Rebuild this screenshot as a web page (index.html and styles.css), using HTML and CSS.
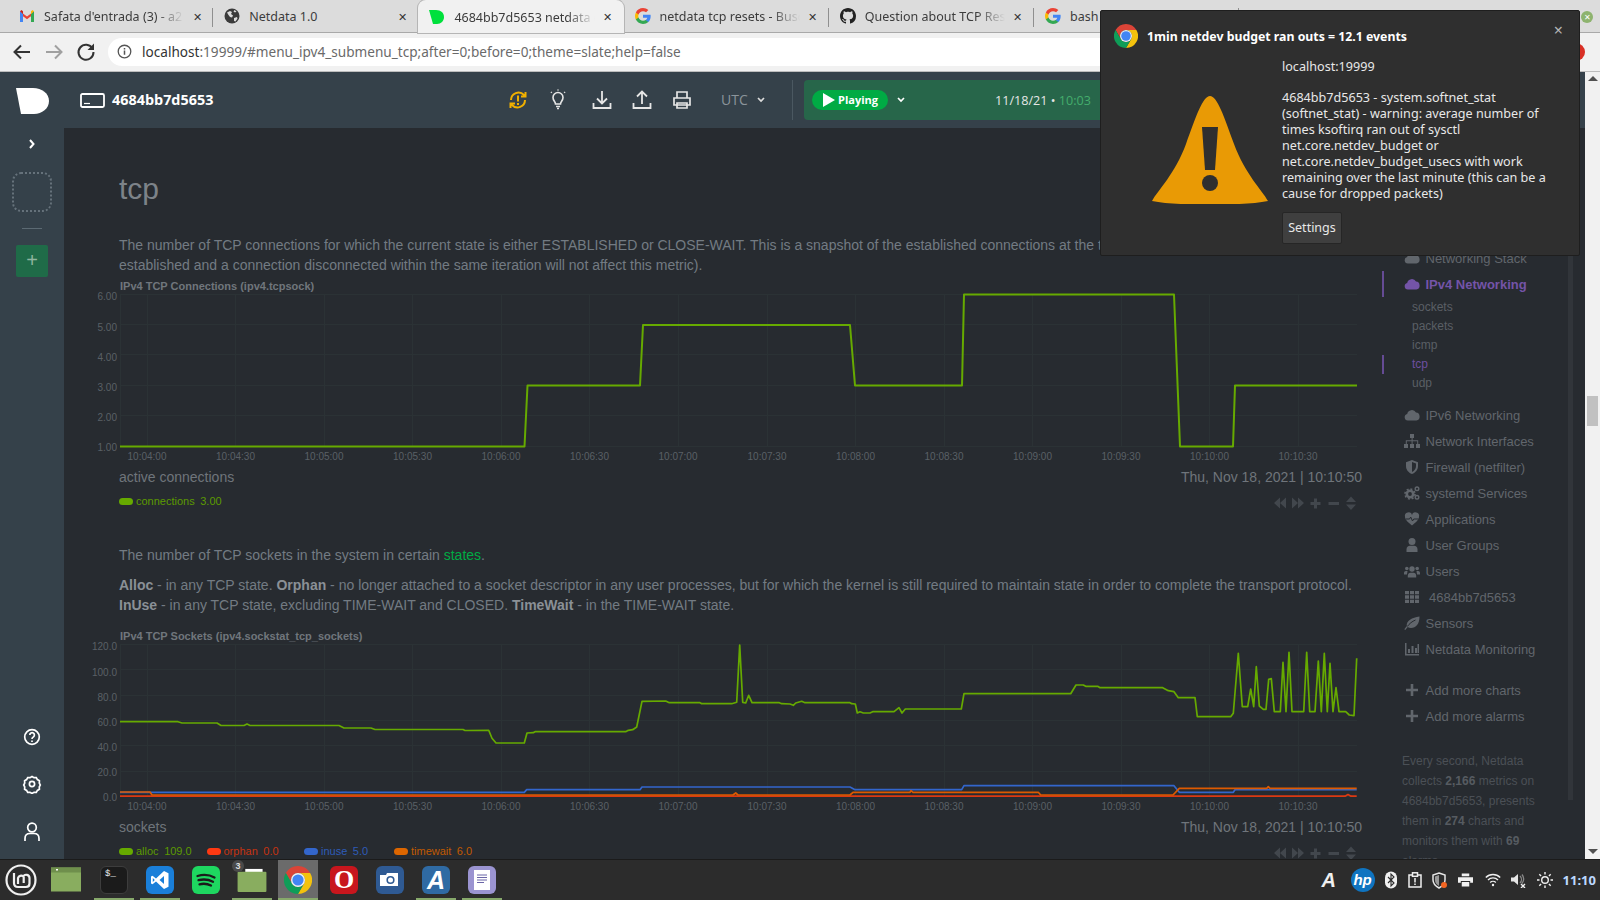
FILE: index.html
```html
<!DOCTYPE html>
<html lang="en">
<head>
<meta charset="utf-8">
<title>4684bb7d5653 netdata dashboard</title>
<link rel="stylesheet" href="styles.css">
</head>
<body>
<svg class="defs" width="0" height="0" aria-hidden="true">
  <symbol id="g-logo" viewBox="0 0 24 24">
    <path fill="#4285f4" d="M23.49 12.27c0-.79-.07-1.54-.19-2.27H12v4.51h6.47c-.29 1.48-1.14 2.73-2.4 3.58v3h3.86c2.26-2.09 3.56-5.17 3.56-8.82z"/>
    <path fill="#34a853" d="M12 24c3.24 0 5.95-1.08 7.93-2.91l-3.86-3c-1.08.72-2.45 1.16-4.07 1.16-3.13 0-5.78-2.11-6.73-4.96H1.29v3.09C3.26 21.3 7.31 24 12 24z"/>
    <path fill="#fbbc05" d="M5.27 14.29c-.25-.72-.38-1.49-.38-2.29s.14-1.57.38-2.29V6.62H1.29C.47 8.24 0 10.06 0 12s.47 3.76 1.29 5.38l3.98-3.09z"/>
    <path fill="#ea4335" d="M12 4.75c1.77 0 3.35.61 4.6 1.8l3.42-3.42C17.95 1.19 15.24 0 12 0 7.31 0 3.26 2.7 1.29 6.62l3.98 3.09c.95-2.85 3.6-4.96 6.73-4.96z"/>
  </symbol>
  <symbol id="chrome" viewBox="0 0 24 24">
    <path fill="#db4437" d="M12 0A12 12 0 0 0 1.6 6L6.8 15A6 6 0 0 1 12 6H22.4A12 12 0 0 0 12 0z"/>
    <path fill="#f4c20d" d="M22.4 6H12A6 6 0 0 1 17.2 15L12 24A12 12 0 0 0 22.4 6z"/>
    <path fill="#0f9d58" d="M1.6 6A12 12 0 0 0 12 24L17.2 15A6 6 0 0 1 6.8 15z"/>
    <circle cx="12" cy="12" r="6" fill="#f1f1f1"/>
    <circle cx="12" cy="12" r="4.8" fill="#4285f4"/>
  </symbol>
  <symbol id="cloud" viewBox="0 0 16 16"><path d="M3.8 13.5A3.3 3.3 0 0 1 3.2 7 4.7 4.7 0 0 1 12 5.6 4 4 0 0 1 12.4 13.5z"/></symbol>
  <symbol id="sitemap" viewBox="0 0 16 16"><path d="M6 1h4v4H8.6v2.3h5.6V11H16v4h-4v-4h1.2V8.3H8.6V11H10v4H6v-4h1.6V8.3H2.8V11H4v4H0v-4h1.8V7.3h5.8V5H6z"/></symbol>
  <symbol id="shield" viewBox="0 0 16 16"><path fill-rule="evenodd" d="M8 1l6 2.2V7c0 3.8-2.4 6.6-6 8-3.6-1.4-6-4.2-6-8V3.2zM8 3v10c2.4-1.200 4-3.300 4-6V4.500z"/></symbol>
  <symbol id="cogs" viewBox="0 0 16 16"><circle cx="6" cy="9" r="3.200" fill="none" stroke="currentColor" stroke-width="2.600"/><circle cx="6" cy="9" r="5" fill="none" stroke="currentColor" stroke-width="1.600" stroke-dasharray="2 1.900"/><circle cx="13" cy="3.800" r="1.800" fill="none" stroke="currentColor" stroke-width="1.400"/><circle cx="13" cy="12.300" r="1.800" fill="none" stroke="currentColor" stroke-width="1.400"/></symbol>
  <symbol id="heart" viewBox="0 0 16 16"><path d="M8 14.500C3 10.500 1 8.500 1 5.800A3.500 3.500 0 0 1 8 4.200 3.500 3.500 0 0 1 15 5.800C15 8.500 13 10.500 8 14.500z"/><path d="M1.500 8h4l1.200-2 1.800 4 1.200-2h5" fill="none" stroke="#272b30" stroke-width="1"/></symbol>
  <symbol id="user" viewBox="0 0 16 16"><circle cx="8" cy="4.500" r="3.500"/><path d="M2.500 15v-2.500C2.500 10 4 8.800 6 8.800h4c2 0 3.500 1.200 3.500 3.700V15z"/></symbol>
  <symbol id="users" viewBox="0 0 16 16"><circle cx="8" cy="6" r="2.700"/><path d="M3.800 14.500v-1.800c0-2 1.200-3 2.600-3h3.200c1.400 0 2.600 1 2.600 3v1.800z"/><circle cx="2.800" cy="5.500" r="1.800"/><circle cx="13.200" cy="5.500" r="1.800"/><path d="M0 11.500V10c0-1.300.8-2 1.800-2H3.500L3 11.500zM16 11.500V10c0-1.300-.8-2-1.800-2H12.500L13 11.500z"/></symbol>
  <symbol id="grid" viewBox="0 0 16 16"><path d="M1 2h4v3.300H1zM6 2h4v3.300H6zM11 2h4v3.300h-4zM1 6.300h4v3.400H1zM6 6.300h4v3.400H6zM11 6.300h4v3.400h-4zM1 10.700h4V14H1zM6 10.700h4V14H6zM11 10.700h4V14h-4z"/></symbol>
  <symbol id="leaf" viewBox="0 0 16 16"><path d="M15.500 1.500C15.500 9 12 13 7 13c-1.300 0-2.500-.3-3.300-.9L1.300 15 .3 14.200l2.500-3.300C2 6 8 2.500 15.500 1.500z"/><path d="M3.300 11.500C5.500 8.500 8 6.500 11.500 5" fill="none" stroke="#272b30" stroke-width="1"/></symbol>
  <symbol id="chartbar" viewBox="0 0 16 16"><path d="M1 2h1.500v11H15v1.500H1zM4 8h2v4H4zM7.500 5H9.500v7h-2zM11 7h2v5h-2zM13.500 3h1.500v9h-1.500z"/></symbol>
  <symbol id="plus" viewBox="0 0 16 16"><path d="M6.700 2h2.600v4.700H14v2.600H9.300V14H6.700V9.300H2V6.700h4.700z"/></symbol>
  <symbol id="ctrls" viewBox="0 0 92 14">
    <path d="M7 1.500v11L1 7zM13 1.500v11L7 7zM19 1.500v11L25 7zM25 1.500v11L31 7zM41 2.500h3v3.500h3.500v3H44v3.500h-3V9h-3.500V6H41zM55.500 6H66v3H55.500zM78 .5l5 5.500H73zM78 14l5-5.500H73z"/>
  </symbol>
</svg>

<header class="tabs">
  <div class="tab">
    <svg class="fav" viewBox="0 0 16 16"><path fill="#ea4335" d="M1 3.200 8 8.500l7-5.300V6l-7 5.300L1 6z"/><path fill="#4285f4" d="M1 3.200V14h3V6z"/><path fill="#34a853" d="M15 3.200V14h-3V6z"/><path fill="#c5221f" d="M1 3.200 2.500 2 4 3.300V6z"/><path fill="#fbbc05" d="M15 3.200 13.500 2 12 3.300V6z"/></svg>
    <span class="tab-label tab-fade">Safata d'entrada (3) - a2</span><span class="tab-x">✕</span>
  </div>
  <div class="tab">
    <svg class="fav" viewBox="0 0 16 16"><circle cx="8" cy="8" r="7.500" fill="#3b3b3b"/><path fill="#dcdcdc" d="M3 4.500l3-1.500 2 1-1 2 2 1.500-1 2-2-.5-1.500-2zM10 10l3-1 .5 1.500-2 3-1.500-.5zM10.500 2l2 1.500-1.500 1-1.500-1z"/></svg>
    <span class="tab-label">Netdata 1.0</span><span class="tab-x">✕</span>
  </div>
  <div class="tab tab-active">
    <svg class="fav" viewBox="0 0 16 16"><path fill="#00e03c" d="M0 1h7c5 0 8 3 8 7s-3 7-7 7H4z"/></svg>
    <span class="tab-label tab-fade">4684bb7d5653 netdata d</span><span class="tab-x">✕</span>
  </div>
  <div class="tab">
    <svg class="fav"><use href="#g-logo"/></svg>
    <span class="tab-label tab-fade">netdata tcp resets - Busc</span><span class="tab-x">✕</span>
  </div>
  <div class="tab">
    <svg class="fav" viewBox="0 0 16 16"><path fill="#222" d="M8 0C3.580 0 0 3.580 0 8c0 3.540 2.290 6.530 5.470 7.590.4.070.55-.17.55-.38 0-.19-.01-.82-.01-1.490-2.010.37-2.530-.49-2.690-.94-.09-.23-.48-.94-.82-1.130-.28-.15-.68-.52-.01-.53.63-.01 1.080.58 1.230.82.72 1.210 1.870.87 2.330.66.07-.52.28-.87.51-1.070-1.780-.2-3.640-.89-3.640-3.950 0-.87.31-1.590.82-2.150-.08-.2-.36-1.020.08-2.120 0 0 .67-.21 2.200.82.64-.18 1.320-.27 2-.27.68 0 1.360.09 2 .27 1.530-1.040 2.200-.82 2.200-.82.44 1.100.16 1.920.08 2.120.51.56.82 1.270.82 2.150 0 3.070-1.870 3.750-3.650 3.950.29.25.54.73.54 1.480 0 1.070-.01 1.930-.01 2.200 0 .21.15.46.55.38A8.013 8.013 0 0 0 16 8c0-4.420-3.580-8-8-8z"/></svg>
    <span class="tab-label tab-fade">Question about TCP Res</span><span class="tab-x">✕</span>
  </div>
  <div class="tab">
    <svg class="fav"><use href="#g-logo"/></svg>
    <span class="tab-label">bash</span>
  </div>
  <span class="win-close">✕</span>
</header>

<nav class="toolbar">
  <svg class="tb-ico" viewBox="0 0 24 24"><path d="M20 12H5M11 5.500 4.500 12l6.500 6.500" fill="none" stroke="#333" stroke-width="2"/></svg>
  <svg class="tb-ico" viewBox="0 0 24 24"><path d="M4 12h15M13 5.500l6.500 6.500-6.500 6.500" fill="none" stroke="#a0a0a0" stroke-width="2"/></svg>
  <svg class="tb-ico" viewBox="0 0 24 24"><path d="M18.500 8.500A7.500 7.500 0 1 0 19.500 12" fill="none" stroke="#333" stroke-width="2"/><path d="M20 3.500v6.500h-6.500z" fill="#333"/></svg>
  <div class="omnibox">
    <svg class="info" viewBox="0 0 16 16"><circle cx="8" cy="8" r="6.700" fill="none" stroke="#555" stroke-width="1.400"/><path d="M7.200 7h1.600v4.500H7.200zM7.200 4.300h1.600v1.600H7.200z" fill="#555"/></svg>
    <span class="url"><b>localhost</b>:19999/#menu_ipv4_submenu_tcp;after=0;before=0;theme=slate;help=false</span>
  </div>
  <span class="update-dot"></span>
</nav>

<div class="viewport">
  <div class="page">
    <div class="ndhead">
      <svg class="nd-logo" viewBox="0 0 33 26"><path fill="#fff" d="M0 0h17c9 0 16 5.500 16 13s-7 13-15 13H5z"/></svg>
      <svg class="nd-node" viewBox="0 0 25 15"><rect x="1" y="1" width="23" height="13" rx="1.500" fill="none" stroke="#fff" stroke-width="1.800"/><path d="M4 10.500h6" stroke="#fff" stroke-width="1.200"/></svg>
      <span class="nd-name">4684bb7d5653</span>
      <div class="tools">
        <svg class="tool" viewBox="0 0 24 24" fill="none" stroke="#f0b000" stroke-width="2"><path d="M5 12a7.500 7.500 0 0 1 13-5l1.500 1.500M19.500 4v4.500H15M19 12a7.500 7.500 0 0 1-13 5l-1.500-1.500M4.500 20v-4.500H9"/><path d="M12 7.500v6M12 15v2"/></svg>
        <svg class="tool" viewBox="0 0 24 24" fill="none" stroke="#e6e6e6" stroke-width="1.600"><path d="M9.500 16c0-2.500-2.500-3.200-2.500-6.500a5 5 0 0 1 10 0c0 3.300-2.500 4-2.500 6.500zM10 18.500h4M11 20.500h2M12 1.500v1M5 4l.8.800M19 4l-.8.800"/></svg>
        <svg class="tool tool-wide" viewBox="0 0 24 24" fill="none" stroke="#e6e6e6" stroke-width="1.800"><path d="M12 3v12M7 10.500l5 5 5-5M3.500 15v5h17v-5"/></svg>
        <svg class="tool" viewBox="0 0 24 24" fill="none" stroke="#e6e6e6" stroke-width="1.800"><path d="M12 16V4M7 8.500l5-5 5 5M3.500 15v5h17v-5"/></svg>
        <svg class="tool" viewBox="0 0 24 24" fill="none" stroke="#e6e6e6" stroke-width="1.700"><path d="M7 10V4h10v6M4 10h16v7H4zM7 15h10v5H7z"/></svg>
      </div>
      <span class="tz">UTC</span>
      <svg class="caret" viewBox="0 0 8 6"><path d="M1 1l3 3 3-3" fill="none" stroke="#dcdcdc" stroke-width="1.700"/></svg>
      <span class="nd-sep"></span>
      <div class="playbar">
        <div class="playbtn"><svg class="playico" viewBox="0 0 12 14"><path d="M0 0l12 7-12 7z" fill="#fff"/></svg><span class="playtxt">Playing</span></div>
        <svg class="caret caret-play" viewBox="0 0 8 6"><path d="M1 1l3 3 3-3" fill="none" stroke="#fff" stroke-width="1.700"/></svg>
        <span class="playdate">11/18/21 • <em>10:03</em></span>
      </div>
    </div>

    <div class="body">
      <aside class="rail">
        <svg class="rail-chev" viewBox="0 0 8 10"><path d="M2 1l3.500 4L2 9" fill="none" stroke="#fff" stroke-width="2"/></svg>
        <div class="rail-slot"></div>
        <div class="rail-hr"></div>
        <div class="rail-add">+</div>
        <div class="rail-foot">
          <svg class="rail-ico" viewBox="0 0 20 20" fill="none" stroke="#fff" stroke-width="1.700"><circle cx="10" cy="10" r="7.300"/><path d="M7.800 8a2.300 2.300 0 1 1 3.500 2c-.9.500-1.300 1-1.300 2M10 13.500v1.500"/></svg>
          <svg class="rail-ico" viewBox="0 0 20 20" fill="none" stroke="#fff" stroke-width="1.700"><path d="M10 2.500l2 1.200 2.300-.1 1.100 2 2 1.200-.1 2.300 1 1.900-1 1.900.1 2.300-2 1.200-1.100 2-2.300-.1-2 1.200-2-1.200-2.300.1-1.100-2-2-1.200.1-2.300-1-1.900 1-1.900-.1-2.300 2-1.200 1.100-2 2.300.1z"/><circle cx="10" cy="10" r="2.600"/></svg>
          <svg class="rail-ico rail-user" viewBox="0 0 20 20" fill="none" stroke="#fff" stroke-width="1.700"><circle cx="10" cy="6.500" r="4.300"/><path d="M3 20v-2.500c0-3 2-5 5-5h4c3 0 5 2 5 5V20"/></svg>
        </div>
      </aside>

      <main class="main">
        <h1 class="title">tcp</h1>
        <p class="text text-first">The number of TCP connections for which the current state is either ESTABLISHED or CLOSE-WAIT. This is a snapshot of the established connections at the time of measurement (i.e. a connection established and a connection disconnected within the same iteration will not affect this metric).</p>
        <div class="chart-title chart-title-1">IPv4 TCP Connections (ipv4.tcpsock)</div>
        <svg class="plot" viewBox="64 292 1306 170" width="1306" height="170">
          <path class="grid" d="M120.500 294V447M147.500 294V447M235.500 294V447M324.500 294V447M412.500 294V447M501.500 294V447M589.500 294V447M678.500 294V447M767.500 294V447M855.500 294V447M944.500 294V447M1032.500 294V447M1121.500 294V447M1209.500 294V447M1298.500 294V447M120 294.500H1357M120 324.500H1357M120 354.500H1357M120 385.500H1357M120 415.500H1357M120 446.500H1357"/>
          <g class="ylab"><text x="117" y="300">6.00</text><text x="117" y="330.500">5.00</text><text x="117" y="360.500">4.00</text><text x="117" y="391">3.00</text><text x="117" y="421">2.00</text><text x="117" y="451">1.00</text></g>
          <g class="xlab"><text x="147" y="460">10:04:00</text><text x="235.500" y="460">10:04:30</text><text x="324" y="460">10:05:00</text><text x="412.500" y="460">10:05:30</text><text x="501" y="460">10:06:00</text><text x="589.500" y="460">10:06:30</text><text x="678" y="460">10:07:00</text><text x="767" y="460">10:07:30</text><text x="855.500" y="460">10:08:00</text><text x="944" y="460">10:08:30</text><text x="1032.500" y="460">10:09:00</text><text x="1121" y="460">10:09:30</text><text x="1209.500" y="460">10:10:00</text><text x="1298" y="460">10:10:30</text></g>
          <polyline class="line l-green l-thick" points="120,446.500 524.500,446.500 527.500,385.500 640,385.500 643,325 850,325 855,385.500 962,385.500 964,294.500 1174,294.500 1180,446.500 1233,446.500 1235,385.500 1357,385.500"/>
        </svg>
        <div class="info-row"><span>active connections</span><span>Thu, Nov 18, 2021 | 10:10:50</span></div>
        <div class="legend-row">
          <span class="leg leg-green"><i></i>connections<b>3.00</b></span>
          <svg class="ctrls"><use href="#ctrls"/></svg>
        </div>
        <p class="text text-second">The number of TCP sockets in the system in certain <a class="link">states</a>.</p>
        <p class="text text-third"><b>Alloc</b> - in any TCP state. <b>Orphan</b> - no longer attached to a socket descriptor in any user processes, but for which the kernel is still required to maintain state in order to complete the transport protocol. <b>InUse</b> - in any TCP state, excluding TIME-WAIT and CLOSED. <b>TimeWait</b> - in the TIME-WAIT state.</p>
        <div class="chart-title chart-title-2">IPv4 TCP Sockets (ipv4.sockstat_tcp_sockets)</div>
        <svg class="plot" viewBox="64 642 1306 170" width="1306" height="170">
          <path class="grid" d="M120.500 644V797M147.500 644V797M235.500 644V797M324.500 644V797M412.500 644V797M501.500 644V797M589.500 644V797M678.500 644V797M767.500 644V797M855.500 644V797M944.500 644V797M1032.500 644V797M1121.500 644V797M1209.500 644V797M1298.500 644V797M120 644.500H1357M120 669.500H1357M120 695.500H1357M120 720.500H1357M120 745.500H1357M120 771.500H1357M120 796.500H1357"/>
          <g class="ylab"><text x="117" y="649.500">120.0</text><text x="117" y="675.500">100.0</text><text x="117" y="700.500">80.0</text><text x="117" y="725.500">60.0</text><text x="117" y="750.500">40.0</text><text x="117" y="775.500">20.0</text><text x="117" y="801">0.0</text></g>
          <g class="xlab"><text x="147" y="810">10:04:00</text><text x="235.500" y="810">10:04:30</text><text x="324" y="810">10:05:00</text><text x="412.500" y="810">10:05:30</text><text x="501" y="810">10:06:00</text><text x="589.500" y="810">10:06:30</text><text x="678" y="810">10:07:00</text><text x="767" y="810">10:07:30</text><text x="855.500" y="810">10:08:00</text><text x="944" y="810">10:08:30</text><text x="1032.500" y="810">10:09:00</text><text x="1121" y="810">10:09:30</text><text x="1209.500" y="810">10:10:00</text><text x="1298" y="810">10:10:30</text></g>
          <polyline class="line l-green" points="120,721.700 178,721.700 182,723 217,723 221,725.500 244,725.500 247,724 250,725.500 339,725.500 344,728 371,728 375,729.500 463,729.500 465,730.500 488.700,730.300 492,738.300 496,743 524.300,743 527,733 533.300,732.700 535,731.700 625.700,731.700 628.300,730.300 632.700,729.700 636.700,727 642,701.300 665.700,701 669.300,702.700 700,702.700 701.700,703.700 731.700,703.700 736.700,702.300 739.700,645 742.700,702.300 745.700,703 748.700,695.300 752,702.700 779.300,702.700 781.700,703.700 790,704 793.300,705.300 795.700,703 801.700,701.300 805,702.700 850,702.700 851.700,703.700 855.300,704 857.300,713 860,711.700 863.300,713 870,713 872.700,711.700 894,711.700 899,707.700 902,713 905.300,709 961.300,709 964,693.700 1070.700,693.700 1076,685 1083.300,685 1085.700,686.300 1097.700,686.300 1100,687.700 1162.700,687.700 1168.300,690.700 1174,691.700 1178.300,697.700 1195,697.700 1197.300,716.700 1230.700,716.700 1233.300,713.300 1238.300,653.300 1242.300,706.700 1247.700,706.700 1250.700,689 1253.700,706.700 1256.300,666.700 1259.300,706 1263.300,709.300 1266,709.300 1268.700,679.300 1271.300,678.700 1274.300,711.700 1280.300,711.700 1283,662.300 1286,711.700 1289,652.300 1292,711.700 1303.700,711.700 1306.700,652.300 1309.700,711.700 1315,711.700 1318.300,661 1321.300,711.700 1324.300,653.300 1327.300,711.700 1330,663.300 1333,711.700 1336,687.700 1339,711.700 1345.700,711.700 1349.300,715 1354,715.700 1356.700,658.300"/>
          <polyline class="line l-blue" points="120,792.300 524.300,792.300 526.700,789.700 640,789.700 642,787 850,787 855,789.700 961.700,789.700 964,785.700 1174,785.700 1179.300,792.300 1233.300,792.300 1235,789.700 1356.700,789.700"/>
          <polyline class="line l-red" points="120,796.200 1345,796.200 1348,794.500 1351,796.200 1356.700,796.200"/>
          <polyline class="line l-orange" points="120,792 150,792 152,795 733,795 735.700,793 738,795 850,795 853,792.300 910,792.300 911,790.700 913,792.300 1038.300,792.300 1040.700,795 1173,795 1179.300,788.300 1266.700,788.300 1268.300,786.700 1270,788.300 1356.700,788.300"/>
        </svg>
        <div class="info-row"><span>sockets</span><span>Thu, Nov 18, 2021 | 10:10:50</span></div>
        <div class="legend-row">
          <span class="leg leg-green leg-w1"><i></i>alloc<b>109.0</b></span>
          <span class="leg leg-red leg-w2"><i></i>orphan<b>0.0</b></span>
          <span class="leg leg-blue leg-w3"><i></i>inuse<b>5.0</b></span>
          <span class="leg leg-orange"><i></i>timewait<b>6.0</b></span>
          <svg class="ctrls"><use href="#ctrls"/></svg>
        </div>
      </main>

      <aside class="side">
        <div class="side-list">
          <a class="nav"><svg class="nav-ico"><use href="#cloud"/></svg>Networking Stack</a>
          <a class="nav nav-on"><svg class="nav-ico"><use href="#cloud"/></svg>IPv4 Networking</a>
          <div class="sub">
            <a class="sub-item">sockets</a>
            <a class="sub-item">packets</a>
            <a class="sub-item">icmp</a>
            <a class="sub-item sub-on">tcp</a>
            <a class="sub-item">udp</a>
          </div>
          <a class="nav"><svg class="nav-ico"><use href="#cloud"/></svg>IPv6 Networking</a>
          <a class="nav"><svg class="nav-ico"><use href="#sitemap"/></svg>Network Interfaces</a>
          <a class="nav"><svg class="nav-ico"><use href="#shield"/></svg>Firewall (netfilter)</a>
          <a class="nav"><svg class="nav-ico"><use href="#cogs"/></svg>systemd Services</a>
          <a class="nav"><svg class="nav-ico"><use href="#heart"/></svg>Applications</a>
          <a class="nav"><svg class="nav-ico"><use href="#user"/></svg>User Groups</a>
          <a class="nav"><svg class="nav-ico"><use href="#users"/></svg>Users</a>
          <a class="nav nav-node"><svg class="nav-ico"><use href="#grid"/></svg>4684bb7d5653</a>
          <a class="nav"><svg class="nav-ico"><use href="#leaf"/></svg>Sensors</a>
          <a class="nav"><svg class="nav-ico"><use href="#chartbar"/></svg>Netdata Monitoring</a>
          <a class="nav nav-add"><svg class="nav-ico"><use href="#plus"/></svg>Add more charts</a>
          <a class="nav"><svg class="nav-ico"><use href="#plus"/></svg>Add more alarms</a>
          <p class="side-note">Every second, Netdata collects <b>2,166</b> metrics on 4684bb7d5653, presents them in <b>274</b> charts and monitors them with <b>69</b> alarms.</p>
        </div>
        <div class="side-thumb"></div>
      </aside>
    </div>
  </div>
  <div class="scrollbar">
    <span class="arrow arrow-up"></span>
    <span class="thumb"></span>
    <span class="arrow arrow-down"></span>
  </div>
</div>

<footer class="taskbar">
  <svg class="mint" viewBox="0 0 32 32" fill="none" stroke="#f0f0f0"><circle cx="16" cy="16" r="14.500" stroke-width="2.200"/><path d="M9 9v10c0 2.500 1.500 4 4 4h8c2 0 3.500-1.500 3.500-3.500V14a3.300 3.300 0 0 0-6.200-1.500A3.300 3.300 0 0 0 13 14v6M18.700 13v6" stroke-width="2.200"/></svg>
  <div class="launcher">
    <div class="cell"><svg class="app app-wide app-first" viewBox="0 0 30 24"><rect width="30" height="24" fill="#89ad5f"/><rect width="30" height="5" fill="#6f8f4c"/><rect x="5" y="1.500" width="2" height="1.500" fill="#fff"/></svg></div>
    <div class="cell cell-run"><div class="app app-term"><span>$_</span></div></div>
    <div class="cell cell-run"><svg class="app" viewBox="0 0 28 28"><rect width="28" height="28" rx="6" fill="#1a7fd9"/><path fill="#fff" d="M18 5l4.500 2.200v13.600L18 23 10 15.500 6.500 18.200 5 17.500V10.500L6.500 9.800 10 12.500zM18 10l-4.500 4 4.500 4zM6.800 12v4l2-2z"/></svg></div>
    <div class="cell"><svg class="app" viewBox="0 0 28 28"><rect width="28" height="28" rx="6" fill="#1ed760"/><path d="M5.500 10c6-1.700 12-1.200 17 1.500M6.500 14.200c5-1.300 10-.8 14.500 1.500M7.500 18.300c4-1 8-.6 11.500 1.200" fill="none" stroke="#1b1b1b" stroke-width="2.300" stroke-linecap="round"/></svg></div>
    <div class="cell cell-run"><svg class="app app-wide" viewBox="0 0 30 26"><path fill="#fff" d="M8 2h18v4H8z"/><rect y="5" width="30" height="21" rx="1" fill="#89ad5f"/></svg><span class="badge">3</span></div>
    <div class="cell cell-run cell-active"><svg class="app"><use href="#chrome"/></svg></div>
    <div class="cell"><div class="app app-opera"><span>O</span></div></div>
    <div class="cell"><svg class="app" viewBox="0 0 28 28"><rect width="28" height="28" rx="6" fill="#2f5a93"/><path fill="#fff" d="M4 9h6l1-2h11v13H4z"/><circle cx="14.500" cy="14" r="3.300" fill="none" stroke="#2f5a93" stroke-width="1.600"/></svg></div>
    <div class="cell cell-run"><div class="app app-a"><span>A</span></div></div>
    <div class="cell cell-run"><svg class="app" viewBox="0 0 28 28"><rect width="28" height="28" rx="6" fill="#9b94d1"/><rect x="6" y="4" width="16" height="20" fill="#fff"/><path d="M9 9h10M9 11.500h10M9 14h10M9 16.500h7" stroke="#6b66a8" stroke-width="1"/></svg></div>
  </div>
  <div class="tray">
    <span class="tray-a">A</span>
    <span class="tray-hp">hp</span>
    <svg class="tray-ico tray-bt" viewBox="0 0 14 20"><rect width="14" height="20" rx="7" fill="#f0f0f0"/><path d="M3.500 6.500l7 7L7 17V3l3.500 3.500-7 7" fill="none" stroke="#2b2b2b" stroke-width="1.300"/></svg>
    <svg class="tray-ico tray-clip" viewBox="0 0 14 16" fill="none" stroke="#f0f0f0" stroke-width="1.500"><rect x="1" y="3" width="12" height="12"/><rect x="4.500" y=".8" width="5" height="3.500" fill="#2b2b2b"/><path d="M7 6v4.500M7 11.500v1.500"/></svg>
    <svg class="tray-ico tray-shield" viewBox="0 0 16 17"><path d="M7 1l6 2v5c0 4-2.500 6-6 8-3.500-2-6-4-6-8V3z" fill="none" stroke="#e6e6e6" stroke-width="1.500"/><path d="M7 3v11c-2.500-1.500-4-3-4-6V4.500z" fill="#999"/><circle cx="12" cy="13" r="3" fill="#f26522"/></svg>
    <svg class="tray-ico tray-print" viewBox="0 0 16 14"><path fill="#f0f0f0" d="M4 0h8v3H4zM0 4h16v6h-3V8H3v2H0zM4 9h8v5H4z"/></svg>
    <svg class="tray-ico tray-wifi" viewBox="0 0 16 14" fill="none" stroke="#f0f0f0" stroke-width="1.400"><path d="M.8 4.500a10 10 0 0 1 14.400 0M3 7a7 7 0 0 1 10 0M5.200 9.500a4 4 0 0 1 5.600 0"/><circle cx="8" cy="12" r="1.200" fill="#f0f0f0" stroke="none"/></svg>
    <svg class="tray-ico tray-vol" viewBox="0 0 16 16"><path fill="#e6e6e6" d="M1 5.500h3L8 2v11L4 9.500H1z"/><path d="M10 4a5 5 0 0 1 0 7M12 2.500a7.500 7.500 0 0 1 0 9" fill="none" stroke="#888" stroke-width="1.300"/><path d="M11 12l4 4M15 12l-4 4" stroke="#f0f0f0" stroke-width="1.400"/></svg>
    <svg class="tray-ico tray-sun" viewBox="0 0 16 16" fill="none" stroke="#f0f0f0" stroke-width="1.400"><circle cx="8" cy="8" r="3.300"/><path d="M8 0v2.500M8 13.500V16M0 8h2.500M13.500 8H16M2.300 2.300l1.800 1.800M11.900 11.900l1.800 1.800M2.300 13.700l1.800-1.800M11.900 4.100l1.800-1.800"/></svg>
    <span class="clock">11:10</span>
  </div>
</footer>

<section class="toast">
  <div class="toast-head">
    <svg class="toast-logo"><use href="#chrome"/></svg>
    <span class="toast-title">1min netdev budget ran outs = 12.1 events</span>
    <span class="toast-x">×</span>
  </div>
  <div class="toast-body">
    <svg class="toast-warn" viewBox="0 0 116 108"><path fill="#e99a05" d="M58 0c7 0 14 20 24 48 11 30 28 46 34 57-14 3-36 3.500-58 3.500S14 108 0 105c6-11 23-27 34-57C44 20 51 0 58 0z"/><path fill="#2f2f2f" d="M50 31h16l-3 43h-10z"/><circle cx="58" cy="87" r="8" fill="#2f2f2f"/></svg>
    <div class="toast-copy">
      <div class="toast-origin">localhost:19999</div>
      <div class="toast-msg">4684bb7d5653 - system.softnet_stat (softnet_stat) - warning: average number of times ksoftirq ran out of sysctl net.core.netdev_budget or net.core.netdev_budget_usecs with work remaining over the last minute (this can be a cause for dropped packets)</div>
      <div class="toast-btn">Settings</div>
    </div>
  </div>
</section>
</body>
</html>
```
FILE: styles.css
```css
* { box-sizing: border-box; }
html, body { margin: 0; padding: 0; }
body {
  width: 1600px; height: 900px; overflow: hidden; position: relative;
  display: flex; flex-direction: column;
  font-family: "Liberation Sans", Arial, sans-serif;
  background: #272b30;
}
.defs { position: absolute; }

/* browser tabs */
.tabs { height: 33px; flex: none; display: flex; padding-left: 8px; background: #dcdcdc; border-bottom: 1px solid #a9a9a9; position: relative; font-family: "Noto Sans", sans-serif; font-size: 12.5px; color: #3c3c3c; }
.tab { width: 205.2px; height: 32px; flex: none; display: flex; align-items: center; padding: 0 9px 0 11px; position: relative; }
.tab::after { content: ""; position: absolute; right: 0; top: 8px; height: 19px; width: 1px; background: #8f8f8f; }
.tab-active { background: #f1f1f1; border-radius: 8px 8px 0 0; height: 33px; box-shadow: 0 0 0 1px #b5b5b5; z-index: 1; }
.tab-active::after { display: none; }
.fav { width: 16px; height: 16px; flex: none; margin-right: 9px; }
.tab-label { flex: 1; min-width: 0; white-space: nowrap; padding-top: 1px; }
.tab-fade { -webkit-mask-image: linear-gradient(to right, #000 80%, transparent 100%); mask-image: linear-gradient(to right, #000 80%, transparent 100%); }
.tab-x { width: 14px; text-align: center; font-size: 11px; color: #333; flex: none; margin-left: 6px; }
.win-close { position: absolute; left: 1581px; top: 11px; width: 12px; height: 12px; border-radius: 50%; background: #8db36e; color: #fff; font-size: 8px; line-height: 12px; text-align: center; }

/* toolbar */
.toolbar { height: 39px; flex: none; display: flex; align-items: center; background: #f1f1f1; border-bottom: 1px solid #bdbdbd; padding-left: 10px; padding-bottom: 1px; }
.tb-ico { width: 24px; height: 24px; flex: none; margin-right: 8px; }
.omnibox { margin-left: 2px; width: 1458px; height: 28px; flex: none; background: #fff; border-radius: 14px; display: flex; align-items: center; padding-left: 9px; font-family: "Noto Sans", sans-serif; font-size: 13.6px; color: #6a6a6a; }
.info { width: 15px; height: 15px; margin-right: 10px; flex: none; }
.url b { font-weight: 400; color: #333; }
.update-dot { width: 18px; height: 18px; border-radius: 50%; background: #d93025; margin-left: 1px; flex: none; }

/* viewport */
.viewport { height: 787px; flex: none; display: flex; }
.page { width: 1585px; flex: none; display: flex; flex-direction: column; }
.scrollbar { width: 15px; flex: none; background: #f1f1f1; display: flex; flex-direction: column; align-items: center; padding-top: 4px; }
.arrow { width: 0; height: 0; border-left: 5px solid transparent; border-right: 5px solid transparent; flex: none; }
.arrow-up { border-bottom: 5px solid #505050; }
.arrow-down { border-top: 5px solid #505050; margin-top: 423px; }
.thumb { width: 11px; height: 30px; background: #c1c1c1; margin-top: 315px; flex: none; }

/* netdata header */
.ndhead { height: 56px; flex: none; background: #35414a; display: flex; align-items: center; padding-left: 16px; }
.nd-logo { width: 33px; height: 26px; flex: none; margin-top: 1px; }
.nd-node { width: 25px; height: 15px; margin-left: 31px; flex: none; }
.nd-name { margin-left: 7px; margin-top: -2px; width: 101px; font-family: "Open Sans", sans-serif; font-size: 14.4px; font-weight: 700; color: #fff; white-space: nowrap; }
.tools { margin-left: 293px; display: flex; gap: 16px; flex: none; }
.tool { width: 24px; height: 24px; flex: none; }
.tool-wide { margin-left: 4px; }
.tz { margin-left: 27px; margin-top: -2px; font-family: "Open Sans", sans-serif; font-size: 14px; color: #8b949b; width: 32px; }
.caret { width: 8px; height: 6px; margin-left: 4px; flex: none; }
.nd-sep { width: 1px; height: 40px; background: #4b5861; margin-left: 27px; flex: none; }
.playbar { margin-left: 11px; width: 540px; height: 40px; flex: none; background: #27664a; border-radius: 4px; display: flex; align-items: center; padding-left: 8px; color: #e6e6e6; font-family: "Open Sans", sans-serif; font-size: 12.6px; }
.playbtn { width: 76px; height: 20px; border-radius: 10px; background: #00ab44; display: flex; align-items: center; padding-left: 11px; font-size: 11px; font-weight: 700; color: #fff; flex: none; }
.playtxt { margin-top: -2px; margin-left: -2px; }
.playico { width: 12px; height: 14px; margin-right: 5px; flex: none; }
.caret-play { margin-left: 9px; }
.playdate { margin-left: 90px; white-space: nowrap; }
.playdate em { font-style: normal; color: #44ad6c; }

/* body */
.body { flex: 1; min-height: 0; display: flex; overflow: hidden; }
.rail { width: 64px; flex: none; background: #35414a; display: flex; flex-direction: column; align-items: center; }
.rail-chev { width: 8px; height: 10px; margin-top: 11px; flex: none; }
.rail-slot { width: 40px; height: 40px; margin-top: 23px; border: 2px dotted #66727b; border-radius: 9px; flex: none; }
.rail-hr { width: 20px; height: 1px; background: #5c6a73; margin-top: 16px; flex: none; }
.rail-add { width: 32px; height: 32px; margin-top: 16px; background: #1f6b48; border-radius: 2px; color: #8fb59f; font-size: 20px; line-height: 31px; text-align: center; flex: none; }
.rail-foot { margin-top: auto; display: flex; flex-direction: column; align-items: center; gap: 27px; padding-bottom: 18px; }
.rail-ico { width: 20px; height: 20px; flex: none; }

.main { width: 1306px; flex: none; overflow: hidden; color: #7b8289; }
.title { margin: 42px 0 0 55px; font-size: 30px; line-height: 38px; font-weight: 400; color: #7d8389; }
.text { margin: 0 16px 0 55px; font-size: 14px; line-height: 20px; color: #737b83; }
.text b { color: #8a9096; }
.text-first { margin-top: 27px; }
.text-second { margin-top: 35px; }
.text-third { margin-top: 10px; }
.link { color: #00ab44; }
.chart-title { margin-left: 56px; font-size: 11px; line-height: 12px; font-weight: 700; color: #70767c; }
.chart-title-1 { margin-top: 5px; }
.chart-title-2 { margin-top: 15px; }
.plot { display: block; overflow: hidden; flex: none; }
.grid { stroke: #2b3235; stroke-width: 1; fill: none; }
.ylab text { font-size: 10px; fill: #5a6066; text-anchor: end; }
.xlab text { font-size: 10px; fill: #5a6066; text-anchor: middle; }
.line { fill: none; stroke-width: 1.700; stroke-linejoin: round; }
.l-thick { stroke-width: 2; }
.l-green { stroke: #66aa00; }
.l-blue { stroke: #3366cc; }
.l-red { stroke: #dc3912; }
.l-orange { stroke: #dd5a00; }

.info-row { margin: 5px 8px 0 55px; display: flex; justify-content: space-between; font-size: 14px; line-height: 20px; color: #6f757b; }
.legend-row { margin: 5px 5px 0 55px; height: 18px; display: flex; align-items: center; font-size: 11px; }
.leg { display: inline-flex; align-items: center; flex: none; }
.leg i { width: 14px; height: 7px; border-radius: 4px; margin-right: 3px; background: currentColor; }
.leg b { font-weight: 400; margin-left: 5.500px; }
.leg-green { color: #5c9a00; }
.leg-green i { background: #66aa00; }
.leg-red { color: #c63310; }
.leg-red i { background: #fe3912; }
.leg-blue { color: #2e5cb8; }
.leg-blue i { background: #3366cc; }
.leg-orange { color: #c25a00; }
.leg-orange i { background: #dd6600; }
.leg-w1 { width: 87.500px; }
.leg-w2 { width: 97.500px; }
.leg-w3 { width: 90px; }
.ctrls { width: 92px; height: 14px; margin-left: auto; margin-top: 4px; fill: #42474d; flex: none; color: #42474d; }

/* right nav */
.side { width: 215px; flex: none; display: flex; overflow: hidden; }
.side-list { width: 198px; flex: none; padding: 117px 0 0 12px; }
.nav { display: flex; align-items: center; height: 26px; font-size: 13px; color: #61666c; position: relative; white-space: nowrap; }
.nav-ico { width: 16px; height: 16px; margin: 0 5.500px 0 22px; fill: #61666c; color: #61666c; flex: none; }
.nav-on { color: #7454a8; font-weight: 700; }
.nav-on .nav-ico { fill: #7454a8; }
.nav-on::before, .sub-on::before { content: ""; position: absolute; left: 0; top: 0; bottom: 0; width: 2px; background: #654b94; }
.nav-node .nav-ico { margin-right: 9px; }
.sub { padding: 1px 0 9px 30px; }
.sub-item { display: block; height: 19px; line-height: 19px; font-size: 12px; color: #5a5f65; position: relative; }
.sub-on { color: #6d4fa0; }
.sub-on::before { left: -30px; }
.nav-add { margin-top: 15px; }
.side-note { margin: 22px 0 0 20px; width: 144px; font-size: 12px; line-height: 20px; color: #4b5056; }
.side-note b { color: #565b61; }
.side-thumb { width: 5px; height: 672px; background: #31353a; flex: none; }

/* taskbar */
.taskbar { height: 41px; flex: none; background: #2c2c2c; border-top: 1px solid #1b1b1b; display: flex; align-items: stretch; position: relative; }
.mint { width: 32px; height: 32px; margin: 4px 0 0 5px; flex: none; }
.launcher { margin-left: 11px; display: flex; gap: 6px; }
.cell { width: 40px; height: 40px; border-bottom: 2px solid transparent; display: flex; align-items: center; justify-content: center; position: relative; flex: none; padding-top: 1px; }
.cell-run { border-bottom-color: #87a96b; }
.cell-active { background: #6b6b6b; }
.app { width: 28px; height: 28px; flex: none; }
.app-wide { width: 30px; height: 25px; }
.app-first { margin-right: 4px; }
.app-term { background: #1b1b1b; border: 1px solid #3d3d3d; border-radius: 6px; color: #f0f0f0; font: 400 9px/1 "Liberation Mono", monospace; padding: 3px 4px; }
.app-opera { background: #c8161d; border-radius: 6px; color: #fff; font: 700 26px/28px "Liberation Serif", serif; text-align: center; }
.app-a { background: #2f6aa3; border-radius: 6px; color: #fff; font: italic 700 25px/28px "Liberation Sans", sans-serif; text-align: center; }
.badge { position: absolute; left: 0; top: 0; width: 12px; height: 12px; border-radius: 50%; background: #4a4a4a; color: #ddd; font: 700 9px/12px "Liberation Sans", sans-serif; text-align: center; }
.tray { margin-left: auto; display: flex; align-items: center; color: #f0f0f0; padding-right: 4px; }
.tray-a { width: 14px; font: italic 700 20px/1 "Liberation Sans", sans-serif; margin-right: 15px; }
.tray-hp { width: 24px; height: 24px; border-radius: 50%; background: #0f74c0; font: italic 700 15px/24px "Liberation Sans", sans-serif; text-align: center; color: #fff; margin-right: 10px; flex: none; }
.tray-ico { flex: none; }
.tray-bt { width: 12px; height: 18px; margin-right: 11px; }
.tray-clip { width: 14px; height: 16px; margin-right: 10px; }
.tray-shield { width: 16px; height: 17px; margin-right: 10px; }
.tray-print { width: 15px; height: 14px; margin-right: 12px; }
.tray-wifi { width: 16px; height: 14px; margin-right: 9px; }
.tray-vol { width: 16px; height: 16px; margin-right: 11px; }
.tray-sun { width: 16px; height: 16px; margin-right: 10px; }
.clock { font: 700 13px/1 "Noto Sans", sans-serif; color: #bcd8ff; }

/* notification */
.toast { position: absolute; left: 1100px; top: 10px; width: 480px; height: 246px; background: #2f2f2f; border: 1px solid #1e1e1e; border-radius: 2px; font-family: "Noto Sans", sans-serif; color: #e8e8e8; z-index: 5; }
.toast-head { display: flex; align-items: center; height: 30px; margin-top: 10px; padding-left: 13px; }
.toast-logo { width: 24px; height: 24px; flex: none; }
.toast-title { margin-left: 9px; font-size: 12.3px; font-weight: 700; color: #fff; white-space: nowrap; }
.toast-x { margin-left: auto; margin-right: 16px; margin-top: -12px; font-size: 16px; color: #b5b5b5; }
.toast-body { display: flex; padding-left: 51px; }
.toast-warn { width: 116px; height: 108px; margin-top: 45px; flex: none; }
.toast-copy { margin-left: 14px; width: 270px; font-size: 12.6px; line-height: 16px; }
.toast-origin { margin-top: 8px; }
.toast-msg { margin-top: 15px; }
.toast-btn { margin-top: 10px; width: 60px; height: 32px; background: #3f3f3f; border: 1px solid #262626; border-radius: 2px; text-align: center; line-height: 30px; font-size: 12.5px; }
```
